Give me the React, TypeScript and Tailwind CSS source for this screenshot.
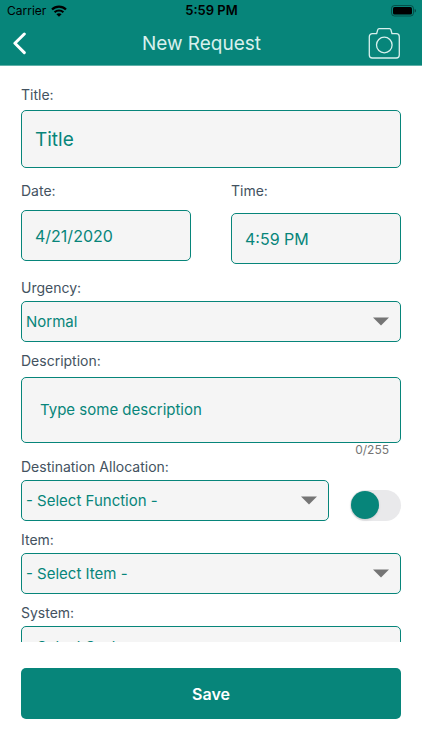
import { useState } from "react";
import type { ReactNode } from "react";

const MAX_DESCRIPTION = 255;

const fieldBox =
  "block w-full rounded-[5px] border border-[#07857a] bg-[#f5f5f5] text-[#07857a] outline-none placeholder:text-[#07857a] placeholder:opacity-100";

const StatusBar = () => {
  return (
    <div className="grid h-[22px] grid-cols-3 items-center pl-[7px] pr-[6px] text-black">
      <div className="flex items-center gap-[5px] text-[12px]">
        <span>Carrier</span>
        <svg width="16" height="12" viewBox="0 0 16 12" aria-hidden="true">
          <g fill="none" stroke="currentColor" strokeWidth="2.2">
            <path d="M1 4.6C4.9 .6 11.1 .6 15 4.6" />
            <path d="M3.6 7.3c2.5-2.4 6.3-2.4 8.8 0" />
          </g>
          <path d="M8 11.8 5.4 9.2c1.5-1.4 3.7-1.4 5.2 0z" fill="currentColor" />
        </svg>
      </div>
      <span className="text-center text-[13px] font-semibold">5:59 PM</span>
      <svg
        className="justify-self-end"
        width="25"
        height="12"
        viewBox="0 0 25 12"
        aria-hidden="true"
      >
        <rect x="0.5" y="0.5" width="22" height="10.5" rx="3" fill="none" stroke="#000" strokeOpacity="0.4" />
        <rect x="2" y="2" width="19" height="7.5" rx="1.6" fill="#000" />
        <path d="M23.7 4v3.6c.9-.4 1.2-1 1.2-1.8s-.3-1.4-1.2-1.8z" fillOpacity="0.5" />
      </svg>
    </div>
  );
};

const Header = () => {
  return (
    <header className="shrink-0 border-b border-[#5fb0a8] bg-[#07857a]">
      <StatusBar />
      <div className="grid h-[43px] grid-cols-[28px_1fr_37px] items-center pl-3 pr-[22px]">
        <button type="button" aria-label="Back" className="text-white">
          <svg width="16" height="24" viewBox="0 0 16 24" fill="none" aria-hidden="true">
            <path
              d="M12.300 2 2.900 11.300l9.400 9.300"
              stroke="currentColor"
              strokeWidth="3"
              strokeLinecap="round"
              strokeLinejoin="round"
            />
          </svg>
        </button>
        <h1 className="text-center text-[19px] leading-6 text-[#d8f0ed]">New Request</h1>
        <button type="button" aria-label="Add photo" className="justify-self-end text-[#d8f0ed]">
          <svg width="32" height="32" viewBox="0 0 32 32" fill="none" stroke="currentColor" strokeWidth="1.3" aria-hidden="true">
            <path
              d="M8.600 5.700H4.300a3 3 0 0 0-3 3v18.300a3 3 0 0 0 3 3h24a3 3 0 0 0 3-3V8.700a3 3 0 0 0-3-3h-4.300l-1.100-3.900a1.500 1.500 0 0 0-1.500-1.100h-10.200a1.500 1.500 0 0 0-1.500 1.100z"
              strokeLinejoin="round"
            />
            <circle cx="16.300" cy="17" r="7.800" />
          </svg>
        </button>
      </div>
    </header>
  );
};

interface FieldLabelProps {
  htmlFor: string;
  children: ReactNode;
}

const FieldLabel = ({ htmlFor, children }: FieldLabelProps) => {
  return (
    <label htmlFor={htmlFor} className="block text-[14px] leading-5 text-[#435260]">
      {children}
    </label>
  );
};

interface SelectBoxProps {
  id: string;
  options: string[];
}

const SelectBox = ({ id, options }: SelectBoxProps) => {
  return (
    <div className="relative">
      <select id={id} className={`${fieldBox} h-[41px] appearance-none pl-1 pr-10 pt-[2px] text-[15px]`}>
        {options.map((option) => (
          <option key={option}>{option}</option>
        ))}
      </select>
      <svg
        className="pointer-events-none absolute right-3 top-4 text-[#757575]"
        width="16"
        height="9"
        viewBox="0 0 16 9"
        aria-hidden="true"
      >
        <path d="M0 .5h16l-8 8z" fill="currentColor" />
      </svg>
    </div>
  );
};

const App = () => {
  const [description, setDescription] = useState("");

  return (
    <div className="flex h-screen flex-col bg-white font-['Inter',sans-serif]">
      <Header />

      <form id="request" className="min-h-0 flex-1 overflow-y-auto px-[21px] pt-[19px] [scrollbar-width:none]">
        <div className="space-y-[5px]">
          <FieldLabel htmlFor="title">Title:</FieldLabel>
          <input id="title" placeholder="Title" className={`${fieldBox} h-[58px] px-[13px] text-[19px]`} />
        </div>

        <div className="mt-[13px] grid grid-cols-2 gap-10">
          <div className="space-y-[9px]">
            <FieldLabel htmlFor="date">Date:</FieldLabel>
            <input id="date" defaultValue="4/21/2020" className={`${fieldBox} h-[51px] px-[13px] text-[16px]`} />
          </div>
          <div className="space-y-3">
            <FieldLabel htmlFor="time">Time:</FieldLabel>
            <input id="time" defaultValue="4:59 PM" className={`${fieldBox} h-[51px] px-[13px] text-[16px]`} />
          </div>
        </div>

        <div className="mt-[14px] space-y-[3px]">
          <FieldLabel htmlFor="urgency">Urgency:</FieldLabel>
          <SelectBox id="urgency" options={["Normal", "Low", "High"]} />
        </div>

        <div className="mt-[9px]">
          <div className="space-y-[6px]">
            <FieldLabel htmlFor="description">Description:</FieldLabel>
            <textarea
              id="description"
              rows={1}
              maxLength={MAX_DESCRIPTION}
              value={description}
              onChange={(e) => setDescription(e.target.value)}
              placeholder="Type some description"
              className={`${fieldBox} h-[66px] resize-none px-[18px] py-5 text-[15px] leading-6`}
            />
          </div>
          <p className="pr-3 text-right text-[12px] leading-[14px] text-[#757575]">
            {description.length}/{MAX_DESCRIPTION}
          </p>
        </div>

        <div className="space-y-[3px]">
          <FieldLabel htmlFor="allocation">Destination Allocation:</FieldLabel>
          <div className="flex items-end gap-[21px]">
            <div className="flex-1">
              <SelectBox id="allocation" options={["- Select Function -"]} />
            </div>
            <input
              type="checkbox"
              role="switch"
              aria-label="Switch allocation"
              className="h-[31px] w-[51px] shrink-0 appearance-none rounded-full bg-[#e9e9eb] p-px before:block before:size-7 before:rounded-full before:bg-[#07857a] before:shadow-sm before:transition-transform checked:before:translate-x-5"
            />
          </div>
        </div>

        <div className="mt-[9px] space-y-[3px]">
          <FieldLabel htmlFor="item">Item:</FieldLabel>
          <SelectBox id="item" options={["- Select Item -"]} />
        </div>

        <div className="mt-[9px] space-y-[3px]">
          <FieldLabel htmlFor="system">System:</FieldLabel>
          <SelectBox id="system" options={["- Select System -"]} />
        </div>
      </form>

      <footer className="shrink-0 px-[21px] pb-[31px] pt-[26px]">
        <button
          type="submit"
          form="request"
          className="h-[51px] w-full rounded-[5px] bg-[#07857a] text-[16px] font-semibold text-white"
        >
          Save
        </button>
      </footer>
    </div>
  );
};

export default App;
